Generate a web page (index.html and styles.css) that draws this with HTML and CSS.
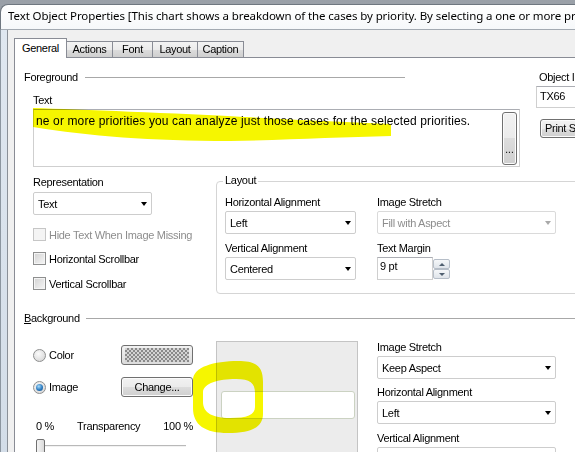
FILE: index.html
```html
<!DOCTYPE html>
<html>
<head>
<meta charset="utf-8">
<link rel="stylesheet" href="styles.css">
</head>
<body>
<div class="window">
  <div class="titlebar">Text Object Properties [This chart shows a breakdown of the cases by priority. By selecting a one or more priorities you can analyze just those cases for the selected priorities.]</div>
  <div class="frame">
    <div class="frame-left"></div>
    <div class="body">
      <div class="tabs">
        <div class="tab active w53">General</div>
        <div class="tab w47">Actions</div>
        <div class="tab w41">Font</div>
        <div class="tab w46">Layout</div>
        <div class="tab w47">Caption</div>
      </div>
      <div class="panel">
        <div class="top">
          <div class="fg">
            <div class="group-head fg-head"><span>Foreground</span><i class="rule"></i></div>
            <div class="label indent text-label">Text</div>
            <div class="textbox">
              <div class="textbox-text">ne or more priorities you can analyze just those cases for the selected priorities.</div>
              <div class="btn ellipsis">...</div>
            </div>
          </div>
          <div class="side">
            <div class="label side-label">Object ID</div>
            <div class="side-input">TX66</div>
            <div class="btn print">Print Settings...</div>
          </div>
        </div>

        <div class="mid">
          <div class="rep">
            <div class="label rep-label">Representation</div>
            <div class="select w119"><span>Text</span><i class="caret"></i></div>
            <div class="check disabled r1"><i class="box"></i><span>Hide Text When Image Missing</span></div>
            <div class="check r2"><i class="box"></i><span>Horizontal Scrollbar</span></div>
            <div class="check r3"><i class="box"></i><span>Vertical Scrollbar</span></div>
          </div>
          <div class="lgroup">
            <div class="gtitle">Layout</div>
            <div class="lcols">
              <div class="col w131">
                <div class="label">Horizontal Alignment</div>
                <div class="select"><span>Left</span><i class="caret"></i></div>
                <div class="label gap7">Vertical Alignment</div>
                <div class="select"><span>Centered</span><i class="caret"></i></div>
              </div>
              <div class="col w179">
                <div class="label">Image Stretch</div>
                <div class="select disabled"><span>Fill with Aspect</span><i class="caret"></i></div>
                <div class="label gap7">Text Margin</div>
                <div class="spin">
                  <div class="spin-input">9 pt</div>
                  <div class="spin-btns">
                    <div class="spin-btn"><i class="tri up"></i></div>
                    <div class="spin-btn"><i class="tri down"></i></div>
                  </div>
                </div>
              </div>
            </div>
          </div>
        </div>

        <div class="group-head bg-head"><span><u>B</u>ackground</span><i class="rule"></i></div>

        <div class="bgrow">
          <div class="bgleft">
            <div class="opt-row color-row">
              <div class="opt"><i class="radio"></i><span>Color</span></div>
              <div class="swatch"><i class="checker"></i></div>
            </div>
            <div class="opt-row image-row">
              <div class="opt"><i class="radio on"><b class="dot"></b></i><span>Image</span></div>
              <div class="btn change">Change...</div>
            </div>
            <div class="trans-row"><span>0 %</span><span>Transparency</span><span>100 %</span></div>
            <div class="slider"><i class="thumb"></i></div>
          </div>
          <div class="preview"><div class="preview-field"></div></div>
          <div class="bgright">
            <div class="label">Image Stretch</div>
            <div class="select"><span>Keep Aspect</span><i class="caret"></i></div>
            <div class="label gap6">Horizontal Alignment</div>
            <div class="select"><span>Left</span><i class="caret"></i></div>
            <div class="label gap7">Vertical Alignment</div>
            <div class="select"><span>Centered</span><i class="caret"></i></div>
          </div>
        </div>
      </div>
    </div>
  </div>
  <svg class="scribbles" width="575" height="452" viewBox="0 0 575 452">
    <path d="M33,108 C90,110 200,114 300,120 L391,124 L391,136 C340,137 290,140 230,141 C150,141 90,136 33,127 Z" fill="#f6f600"/>
    <path fill-rule="evenodd" fill="#f6f600" d="M193,380 C193,367 214,361 238,361 C256,361 263,366 263,382 L263,414 C263,428 250,433 228,433 C205,433 193,425 193,408 Z M203,392 C204,383 218,379 236,379 C250,379 255,383 255,393 L255,407 C255,415 247,418 230,418 C213,418 203,413 203,402 Z"/>
  </svg>
</div>
</body>
</html>
```

FILE: styles.css
```css
* { box-sizing: border-box; }

body {
  margin: 0;
  background: #f0f0f0;
  font-family: "Liberation Sans", Arial, sans-serif;
  font-size: 11px;
  letter-spacing: -0.3px;
  color: #000;
}

.window {
  position: relative;
  width: 575px;
  height: 452px;
  overflow: hidden;
  background: linear-gradient(#9aa0a8, #c3c8ce);
}

.titlebar {
  margin-top: 4px;
  height: 26px;
  padding-left: 7px;
  background: linear-gradient(#ffffff, #f6f8fa);
  border-top: 1px solid #6f7780;
  border-left: 1px solid #6f7780;
  border-bottom: 1px solid #a3aab2;
  border-top-left-radius: 8px;
  font-family: "Noto Sans", "Open Sans", sans-serif;
  font-size: 11.5px;
  letter-spacing: -0.1px;
  line-height: 22px;
  white-space: nowrap;
  overflow: hidden;
}

.frame {
  display: flex;
  height: 422px;
}

.frame-left {
  width: 8px;
  background: linear-gradient(#dfe7f0, #d3dde8);
  border-left: 1px solid #8c96a0;
  border-right: 1px solid #8a9098;
}

.body {
  flex: 1;
  background: #f0f0f0;
  padding: 8px 0 0 6px;
  min-width: 0;
}

.tabs {
  display: flex;
  align-items: flex-end;
  height: 19px;
}

.tab {
  height: 16px;
  margin-left: -1px;
  border: 1px solid #898c95;
  border-bottom: none;
  background: linear-gradient(#f3f3f3, #ebebeb 50%, #dddddd 50%, #cfcfcf);
  text-align: center;
  line-height: 15px;
}

.tab.active {
  height: 20px;
  margin-left: 0;
  margin-bottom: -1px;
  background: #fff;
  position: relative;
  z-index: 1;
  line-height: 18px;
}

.w53 { width: 53px; }
.w47 { width: 47px; }
.w41 { width: 41px; }
.w46 { width: 46px; }

.panel {
  height: 395px;
  background: #fff;
  border-top: 1px solid #898c95;
  border-left: 1px solid #898c95;
}

.label {
  height: 14px;
  line-height: 14px;
  white-space: nowrap;
}

.top { display: flex; }

.fg {
  width: 521px;
  flex: none;
  padding-left: 9px;
}

.group-head {
  display: flex;
  align-items: center;
  height: 14px;
  line-height: 14px;
  white-space: nowrap;
}

.rule {
  flex: 1;
  height: 0;
  border-top: 1px solid #a8a8a8;
  margin-left: 7px;
}

.fg-head {
  margin-top: 12px;
  width: 381px;
}

.indent { margin-left: 9px; }
.text-label { margin-top: 9px; }

.textbox {
  display: flex;
  margin: 2px 0 0 9px;
  width: 487px;
  height: 58px;
  padding: 4px 2px 2px 2px;
  border: 1px solid #cfcfcf;
  border-top-color: #abadb3;
}

.textbox-text {
  font-size: 12px;
  letter-spacing: 0.13px;
  line-height: 14px;
  white-space: nowrap;
}

.btn {
  border: 1px solid #707070;
  border-radius: 3px;
  background: linear-gradient(#f2f2f2, #ebebeb 50%, #dddddd 50%, #cfcfcf);
  box-shadow: inset 0 0 0 1px #fbfbfb;
  white-space: nowrap;
  overflow: hidden;
}

.ellipsis {
  margin-left: auto;
  margin-top: -2px;
  width: 15px;
  height: 53px;
  display: flex;
  align-items: flex-end;
  justify-content: center;
  padding-bottom: 9px;
  line-height: 10px;
  font-size: 10px;
  letter-spacing: 0;
}

.side {
  flex: 1;
  padding-top: 12px;
  min-width: 0;
}

.side-label { margin-left: 3px; }

.side-input {
  margin-top: 2px;
  width: 60px;
  height: 22px;
  padding-left: 3px;
  line-height: 18px;
  border: 1px solid #cfcfcf;
  border-top-color: #abadb3;
}

.print {
  margin: 11px 0 0 4px;
  width: 60px;
  height: 19px;
  padding-left: 4px;
  line-height: 17px;
}

/* middle row */
.mid {
  display: flex;
  margin-top: 6px;
}

.rep {
  width: 201px;
  flex: none;
  padding-left: 18px;
}

.rep-label { margin-top: 2px; }
.rep .select { margin-top: 3px; }
.w119 { width: 119px; }

.select {
  display: flex;
  align-items: center;
  justify-content: space-between;
  height: 23px;
  margin-top: 2px;
  padding: 0 4px 0 4px;
  background: #fff;
  border: 1px solid #cdcdcd;
  border-radius: 2px;
  white-space: nowrap;
}

.caret {
  width: 0;
  height: 0;
  border-left: 3px solid transparent;
  border-right: 3px solid transparent;
  border-top: 4px solid #000;
}

.select.disabled { color: #8d8d8d; border-color: #dadada; }
.select.disabled .caret { border-top-color: #a9a9a9; }

.check {
  display: flex;
  align-items: center;
  height: 13px;
  gap: 3px;
  white-space: nowrap;
}
.check.r1 { margin-top: 13px; }
.check.r2 { margin-top: 11px; }
.check.r3 { margin-top: 12px; }

.box {
  width: 13px;
  height: 13px;
  flex: none;
  border: 1px solid #8e8f8f;
  background: linear-gradient(135deg, #d2d2d2, #f6f6f6);
  box-shadow: inset 0 0 0 1px #f4f4f4;
}

.check.disabled { color: #8d8d8d; }
.check.disabled .box {
  border-color: #c6c6c6;
  background: #f4f4f4;
  box-shadow: none;
}

.lgroup {
  flex: 1;
  margin-top: 8px;
  margin-right: -12px;
  padding: 0 0 13px 8px;
  border: 1px solid #d5d5d5;
  border-radius: 4px;
}

.gtitle {
  width: fit-content;
  margin: -9px 0 0 -2px;
  padding: 0 2px;
  background: #fff;
  line-height: 14px;
  height: 14px;
}

.lcols {
  display: flex;
  gap: 21px;
  margin-top: 8px;
}

.w131 { width: 131px; }
.w179 { width: 179px; }

.gap6 { margin-top: 6px; }
.gap7 { margin-top: 7px; }

.spin {
  display: flex;
  margin-top: 2px;
  height: 23px;
}

.spin-input {
  width: 56px;
  height: 23px;
  padding: 1px 0 0 2px;
  line-height: 14px;
  border: 1px solid #cfcfcf;
  border-top-color: #abadb3;
}

.spin-btns {
  display: flex;
  flex-direction: column;
  padding-top: 2px;
}

.spin-btn {
  width: 17px;
  height: 10px;
  display: flex;
  align-items: center;
  justify-content: center;
  border: 1px solid #b6bec8;
  border-radius: 2px;
  background: linear-gradient(#f5f7f9, #dfe4ea);
}

.tri {
  width: 0;
  height: 0;
  border-left: 3px solid transparent;
  border-right: 3px solid transparent;
}
.tri.up { border-bottom: 3px solid #4f5f70; }
.tri.down { border-top: 3px solid #4f5f70; }

/* background section */
.bg-head {
  margin: 17px 0 0 9px;
}
.bg-head .rule { margin-left: 6px; }

.bgrow {
  display: flex;
  align-items: flex-start;
}

.bgleft {
  width: 201px;
  flex: none;
  padding-left: 18px;
}

.opt-row {
  display: flex;
  align-items: center;
  height: 20px;
}
.color-row { margin-top: 20px; }
.image-row { margin-top: 12px; }

.opt {
  width: 88px;
  display: flex;
  align-items: center;
  gap: 3px;
}

.radio {
  width: 13px;
  height: 13px;
  flex: none;
  border-radius: 50%;
  border: 1px solid #8e8f8f;
  background: radial-gradient(circle at 40% 35%, #fbfbfb, #d0d0d0);
  display: flex;
  align-items: center;
  justify-content: center;
}

.dot {
  width: 7px;
  height: 7px;
  border-radius: 50%;
  background: radial-gradient(circle at 40% 35%, #a8dcfb, #2c7bc0 55%, #174f84);
}

.swatch {
  width: 72px;
  height: 20px;
  padding: 2px 3px;
  border: 1px solid #707070;
  border-radius: 3px;
  background: linear-gradient(#f2f2f2, #dcdcdc);
  display: flex;
}

.checker {
  flex: 1;
  background: repeating-conic-gradient(#8a8a8a 0 25%, #d4d4d4 0 50%) 0 0 / 4px 4px;
}

.change {
  width: 72px;
  height: 20px;
  text-align: center;
  line-height: 18px;
}

.trans-row {
  display: flex;
  justify-content: space-between;
  width: 157px;
  margin: 22px 0 0 3px;
  height: 14px;
  line-height: 14px;
  white-space: nowrap;
}

.slider {
  position: relative;
  margin: 6px 0 0 7px;
  width: 146px;
  height: 16px;
  background: linear-gradient(transparent 6px, #b9b9b9 6px, #b9b9b9 7px, #f2f2f2 7px, #f2f2f2 8px, transparent 8px);
}

.thumb {
  position: absolute;
  left: -4px;
  top: 0;
  width: 9px;
  height: 16px;
  border: 1px solid #707070;
  border-radius: 2px;
  background: linear-gradient(90deg, #f4f4f4, #dadada);
}

.preview {
  width: 142px;
  height: 120px;
  flex: none;
  margin-top: 16px;
  padding: 49px 0 0 4px;
  background: #ececec;
  border: 1px solid #c4c4c4;
}

.preview-field {
  width: 134px;
  height: 28px;
  background: #fff;
  border: 1px solid #cbd2c2;
  border-radius: 3px;
}

.bgright {
  margin: 15px 0 0 19px;
  width: 179px;
}

.scribbles {
  position: absolute;
  left: 0;
  top: 0;
  pointer-events: none;
  mix-blend-mode: multiply;
}
```
